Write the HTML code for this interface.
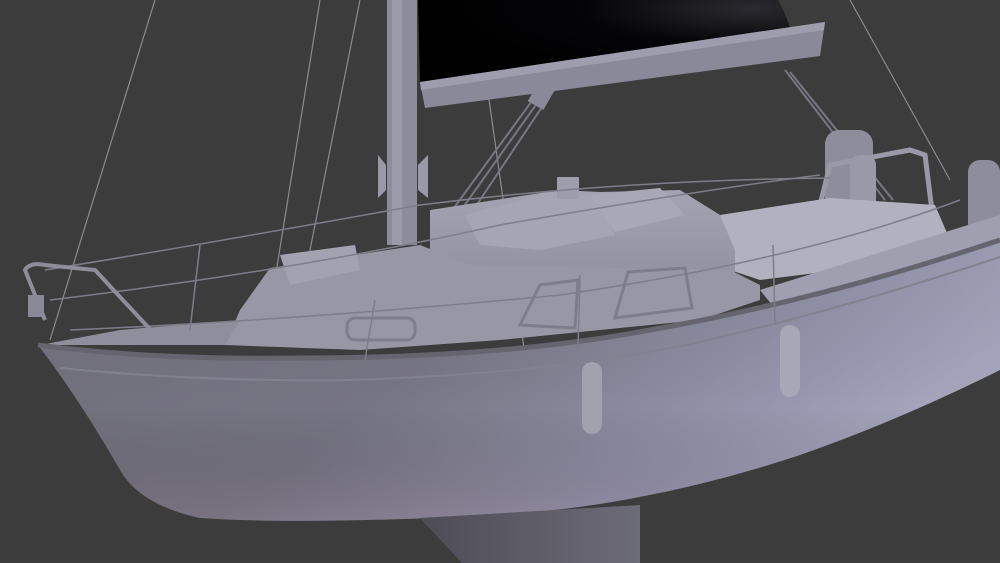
<!DOCTYPE html>
<html><head><style>html,body{margin:0;padding:0;background:#3c3c3c;overflow:hidden}svg{display:block}</style></head>
<body>
<svg width="1000" height="563" viewBox="0 0 1000 563" xmlns="http://www.w3.org/2000/svg">
<defs>
<linearGradient id="hull" x1="0" y1="0" x2="1" y2="0.4">
<stop offset="0" stop-color="#6f6e7a"/><stop offset="0.5" stop-color="#767583"/><stop offset="0.85" stop-color="#9494ac"/><stop offset="1" stop-color="#a4a4bc"/>
</linearGradient>
<linearGradient id="hullv" x1="0" y1="0" x2="0" y2="1">
<stop offset="0" stop-color="#fff" stop-opacity="0.04"/><stop offset="0.6" stop-color="#000" stop-opacity="0"/><stop offset="1" stop-color="#8a7080" stop-opacity="0.25"/>
</linearGradient>
<radialGradient id="sail" cx="0.9" cy="0.1" r="0.9"><stop offset="0" stop-color="#2a2a30"/><stop offset="0.5" stop-color="#050508"/><stop offset="1" stop-color="#000"/></radialGradient>
<linearGradient id="keel" x1="0" y1="0" x2="1" y2="0"><stop offset="0" stop-color="#4e4d56"/><stop offset="1" stop-color="#6c6b78"/></linearGradient>
<linearGradient id="cab" x1="0" y1="0" x2="0" y2="1"><stop offset="0" stop-color="#a4a3b2"/><stop offset="1" stop-color="#8e8d9c"/></linearGradient>
</defs>
<rect width="1000" height="563" fill="#3c3c3c"/>
<g stroke="#8a8a92" stroke-width="1.2" fill="none">
<line x1="155" y1="0" x2="50" y2="340"/>
<line x1="320" y1="0" x2="270" y2="310"/>
<line x1="850" y1="0" x2="950" y2="180"/>
<line x1="475" y1="0" x2="525" y2="355"/>
<line x1="360" y1="0" x2="300" y2="300"/>
</g>
<path d="M418 0 L778 0 Q786 14 790 28 L420 82 Z" fill="url(#sail)"/>
<path d="M420 82 L825 22 L820 56 L425 108 Z" fill="#8a8999"/>
<path d="M420 82 L825 22 L824 30 L421 90 Z" fill="#9e9dae"/>
<rect x="387" y="0" width="30" height="245" fill="#8d8c9a"/>
<rect x="392" y="0" width="10" height="245" fill="#9c9baa"/>
<path d="M378 155 L386 165 L386 190 L378 198 Z M428 155 L418 165 L418 190 L428 198 Z" fill="#9a99a8"/>
<g stroke="#777784" stroke-width="2" fill="none">
<line x1="545" y1="92" x2="440" y2="240"/><line x1="550" y1="95" x2="450" y2="245"/><line x1="540" y1="90" x2="432" y2="238"/>
<line x1="785" y1="70" x2="885" y2="200"/><line x1="790" y1="72" x2="893" y2="200"/>
</g>
<rect x="532" y="85" width="18" height="22" fill="#8a8999" transform="rotate(30 541 96)"/>
<rect x="825" y="130" width="48" height="90" rx="14" fill="#8e8d9c"/>
<rect x="850" y="155" width="26" height="70" rx="10" fill="#9a99a8"/>
<path d="M820 205 L830 165 L910 150 L925 155 L935 235" stroke="#9a99a8" stroke-width="5" fill="none"/>
<rect x="968" y="160" width="32" height="85" rx="12" fill="#8e8d9c"/>
<path d="M720 215 L830 198 L935 205 L950 240 L920 260 L760 280 L730 270 Z" fill="#b2b1c0"/>
<path d="M430 210 L560 190 L600 192 L680 190 L720 215 L735 250 L735 290 L600 300 L470 290 L430 250 Z" fill="url(#cab)"/>
<path d="M465 215 L560 190 L600 200 L615 235 L540 250 L480 245 Z" fill="#a6a5b4"/>
<path d="M590 195 L660 188 L685 215 L615 232 Z" fill="#a9a8b7"/>
<rect x="557" y="177" width="22" height="22" fill="#9e9dac"/>
<path d="M270 268 L420 245 L470 265 L730 270 L760 285 L760 300 L700 320 L500 340 L360 350 L225 345 L240 310 Z" fill="#9897a6"/>
<path d="M280 255 L355 245 L360 270 L290 285 Z" fill="#a3a2b1"/>
<rect x="347" y="318" width="68" height="22" rx="8" fill="none" stroke="#7e7d8c" stroke-width="3"/>
<path d="M520 325 L540 285 L578 280 L575 328 Z" fill="none" stroke="#7e7d8c" stroke-width="3"/>
<path d="M615 318 L628 272 L685 268 L692 308 Z" fill="none" stroke="#7e7d8c" stroke-width="3"/>
<path d="M40 345 L120 330 L240 320 L225 345 Z" fill="#8f8e9c"/>
<path d="M760 290 L1000 215 L1000 255 L780 315 Z" fill="#a09fb0"/>
<path d="M38 345 Q150 360 300 358 Q500 358 650 330 Q820 300 1000 240 L1000 370 Q900 420 800 455 Q650 505 500 515 Q300 525 200 518 Q140 505 120 470 Q80 400 38 345 Z" fill="url(#hull)"/>
<path d="M38 345 Q150 360 300 358 Q500 358 650 330 Q820 300 1000 240 L1000 370 Q900 420 800 455 Q650 505 500 515 Q300 525 200 518 Q140 505 120 470 Q80 400 38 345 Z" fill="url(#hullv)"/>
<path d="M38 345 Q150 360 300 358 Q500 358 650 330 Q820 300 1000 240" stroke="#65646f" stroke-width="5" fill="none"/>
<path d="M60 368 Q200 382 350 380 Q550 374 700 342 Q850 307 1000 257" stroke="#82818f" stroke-width="2" fill="none"/>
<path d="M420 518 L640 505 L640 563 L462 563 Z" fill="url(#keel)"/>
<rect x="582" y="362" width="20" height="72" rx="10" fill="#a2a1b0"/>
<rect x="780" y="325" width="20" height="72" rx="10" fill="#a8a7b6"/>
<g stroke="#7e7d8a" stroke-width="1.5" fill="none">
<path d="M50 300 Q300 270 500 225 Q700 190 820 175"/>
<path d="M45 270 Q200 245 420 205 Q620 180 830 178"/>
<path d="M70 330 Q300 320 560 295 Q800 260 960 200"/>
<line x1="200" y1="245" x2="190" y2="330"/><line x1="375" y1="300" x2="365" y2="360"/>
<line x1="580" y1="275" x2="578" y2="350"/><line x1="773" y1="245" x2="775" y2="325"/>
</g>
<path d="M45 320 L25 270 Q30 262 45 265 L95 270 L160 340" stroke="#8e8d9a" stroke-width="4" fill="none"/>
<rect x="28" y="295" width="16" height="22" fill="#8a8998"/>
</svg>
</body></html>
